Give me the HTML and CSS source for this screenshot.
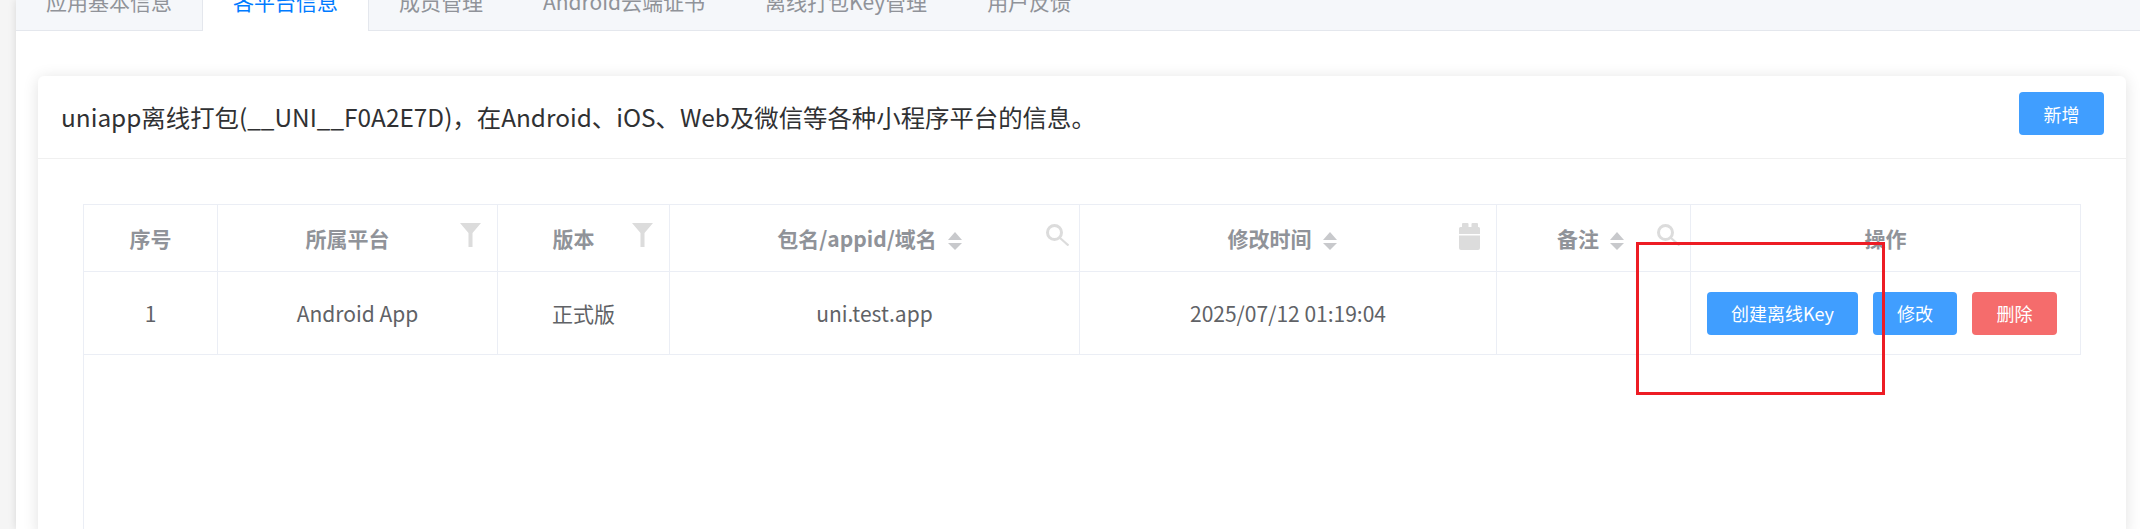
FILE: index.html
```html
<!DOCTYPE html>
<html lang="zh-CN">
<head>
	<meta charset="utf-8">
	<title>各平台信息</title>
	<link rel="stylesheet" href="styles.css">
</head>
<body>
	<div class="panel">
		<div class="tabs">
			<div class="tab">应用基本信息</div>
			<div class="tab active">各平台信息</div>
			<div class="tab">成员管理</div>
			<div class="tab">Android云端证书</div>
			<div class="tab">离线打包Key管理</div>
			<div class="tab">用户反馈</div>
		</div>
		<div class="card">
			<div class="card-header">
				<span class="card-title">uniapp离线打包(__UNI__F0A2E7D)，在Android、iOS、Web及微信等各种小程序平台的信息。</span>
				<button class="btn btn-add">新增</button>
			</div>
			<div class="card-body">
				<div class="grid-wrap">
					<table class="grid">
						<colgroup>
							<col class="c-index"><col class="c-platform"><col class="c-version"><col class="c-package"><col class="c-time"><col class="c-note"><col class="c-action">
						</colgroup>
						<thead>
							<tr>
								<th>序号</th>
								<th class="th-filter">所属平台
									<svg class="head-icon filter" viewBox="0 0 21 24"><path d="M0 0h21L12.5 10v14h-4V10z"/></svg>
								</th>
								<th class="th-filter">版本
									<svg class="head-icon filter" viewBox="0 0 21 24"><path d="M0 0h21L12.5 10v14h-4V10z"/></svg>
								</th>
								<th class="th-package">包名/appid/域名<span class="sort"><i class="up"></i><i class="down"></i></span>
									<svg class="head-icon search" viewBox="0 0 23 22"><circle cx="8.500" cy="8.500" r="7" fill="none" stroke-width="3"/><path d="M14 14l8.500 7.500" fill="none" stroke-width="2.200"/></svg>
								</th>
								<th class="th-time">修改时间<span class="sort"><i class="up"></i><i class="down"></i></span>
									<svg class="head-icon date" viewBox="0 0 21 27"><path d="M3 1a1 1 0 0 1 1-1h4.500a1 1 0 0 1 1 1v3h3V1a1 1 0 0 1 1-1H18a1 1 0 0 1 1 1v3h.500A1.500 1.500 0 0 1 21 5.500V11H0V5.500A1.500 1.500 0 0 1 1.500 4H3zM0 12.500h21V25a2 2 0 0 1-2 2H2a2 2 0 0 1-2-2z"/></svg>
								</th>
								<th class="th-note">备注<span class="sort"><i class="up"></i><i class="down"></i></span>
									<svg class="head-icon search" viewBox="0 0 23 22"><circle cx="8.500" cy="8.500" r="7" fill="none" stroke-width="3"/><path d="M14 14l8.500 7.500" fill="none" stroke-width="2.200"/></svg>
								</th>
								<th>操作</th>
							</tr>
						</thead>
						<tbody>
							<tr>
								<td>1</td>
								<td>Android App</td>
								<td>正式版</td>
								<td>uni.test.app</td>
								<td>2025/07/12 01:19:04</td>
								<td></td>
								<td>
									<div class="actions">
										<button class="btn btn-key">创建离线Key</button>
										<button class="btn btn-edit">修改</button>
										<button class="btn btn-danger">删除</button>
									</div>
								</td>
							</tr>
						</tbody>
					</table>
				</div>
			</div>
		</div>
	</div>
	<div class="mark"></div>
</body>
</html>
```

FILE: styles.css
```css
:root {
	--primary: #409eff;
	--active: #007bff;
	--danger: #f56c6c;
	--line: #ebeef5;
	--tab-line: #e4e7ed;
	--head-text: #909399;
	--body-text: #606266;
	--icon: #dcdcdc;
}
* {
	margin: 0;
	padding: 0;
	box-sizing: border-box;
}
html, body {
	height: 529px;
	overflow: hidden;
}
body {
	position: relative;
	background: #f5f5f5;
	padding-left: 16px;
	font-family: "Noto Sans CJK SC", "Noto Sans", sans-serif;
}
.panel {
	height: 529px;
	background: #fff;
	box-shadow: 0 0 8px rgba(0, 0, 0, 0.12);
	overflow: hidden;
}
.tabs {
	display: flex;
	height: 31px;
	background: #f5f7fa;
	border-bottom: 1px solid var(--tab-line);
	margin-bottom: 45px;
}
.tab {
	height: 31px;
	margin-top: -14px;
	padding: 0 30px;
	font-size: 21px;
	line-height: 30px;
	color: var(--head-text);
	white-space: nowrap;
}
.tab.active {
	height: 45px;
	background: #fff;
	color: var(--active);
	border-left: 1px solid var(--tab-line);
	border-right: 1px solid var(--tab-line);
}
.card {
	width: 2088px;
	margin-left: 22px;
	height: 460px;
	background: #fff;
	border-radius: 6px;
	box-shadow: 0 2px 16px rgba(0, 0, 0, 0.12);
}
.card-header {
	display: flex;
	align-items: center;
	justify-content: space-between;
	height: 83px;
	padding: 0 22px 2px 23px;
	border-bottom: 1px solid #f0f0f0;
}
.card-title {
	font-size: 24.4px;
	color: #303133;
}
.btn {
	height: 43px;
	border: 0;
	border-radius: 4px;
	background: var(--primary);
	color: #fff;
	font-family: inherit;
	font-size: 18px;
}
.btn-add {
	width: 85px;
	align-self: flex-start;
	margin-top: 16px;
}
.card-body {
	padding: 45px 45px 0;
}
.grid-wrap {
	height: 332px;
	border-left: 1px solid var(--line);
}
.grid {
	width: calc(100% + 1px);
	margin-left: -1px;
	border-collapse: collapse;
	table-layout: fixed;
}
.grid th, .grid td {
	border: 1px solid var(--line);
	text-align: center;
	font-size: 21px;
}
.grid th {
	position: relative;
	height: 67px;
	color: var(--head-text);
	font-weight: 700;
}
.grid th.th-filter {
	padding-right: 20px;
}
.grid th.th-package {
	padding-right: 10px;
}
.grid th.th-time {
	padding-right: 12px;
}
.grid th.th-note {
	padding-right: 6px;
}
.grid td {
	height: 83px;
	color: var(--body-text);
}
.c-index { width: 134px; }
.c-platform { width: 280px; }
.c-version { width: 172px; }
.c-package { width: 410px; }
.c-time { width: 417px; }
.c-note { width: 194px; }
.head-icon {
	position: absolute;
	fill: var(--icon);
	stroke: var(--icon);
	stroke-width: 0;
}
.head-icon.filter {
	top: 18px;
	right: 16px;
	width: 21px;
	height: 24px;
}
.head-icon.search {
	top: 19px;
	right: 10px;
	width: 23px;
	height: 22px;
}
.head-icon.date {
	top: 18px;
	right: 16px;
	width: 21px;
	height: 27px;
}
.sort {
	display: inline-block;
	width: 14px;
	height: 18px;
	margin-left: 11px;
	vertical-align: -3px;
	position: relative;
}
.sort i {
	position: absolute;
	left: 0;
	border-left: 7px solid transparent;
	border-right: 7px solid transparent;
}
.sort .up {
	top: 0;
	border-bottom: 8px solid #c8c9cc;
}
.sort .down {
	bottom: 0;
	border-top: 7px solid #c8c9cc;
}
.actions {
	display: flex;
	gap: 15px;
	padding-left: 16px;
}
.btn-key { width: 151px; }
.btn-edit { width: 84px; }
.btn-danger {
	width: 85px;
	background: var(--danger);
}
.mark {
	position: absolute;
	left: 1636px;
	top: 242px;
	width: 249px;
	height: 153px;
	border: 3px solid #ed1c24;
}
```
